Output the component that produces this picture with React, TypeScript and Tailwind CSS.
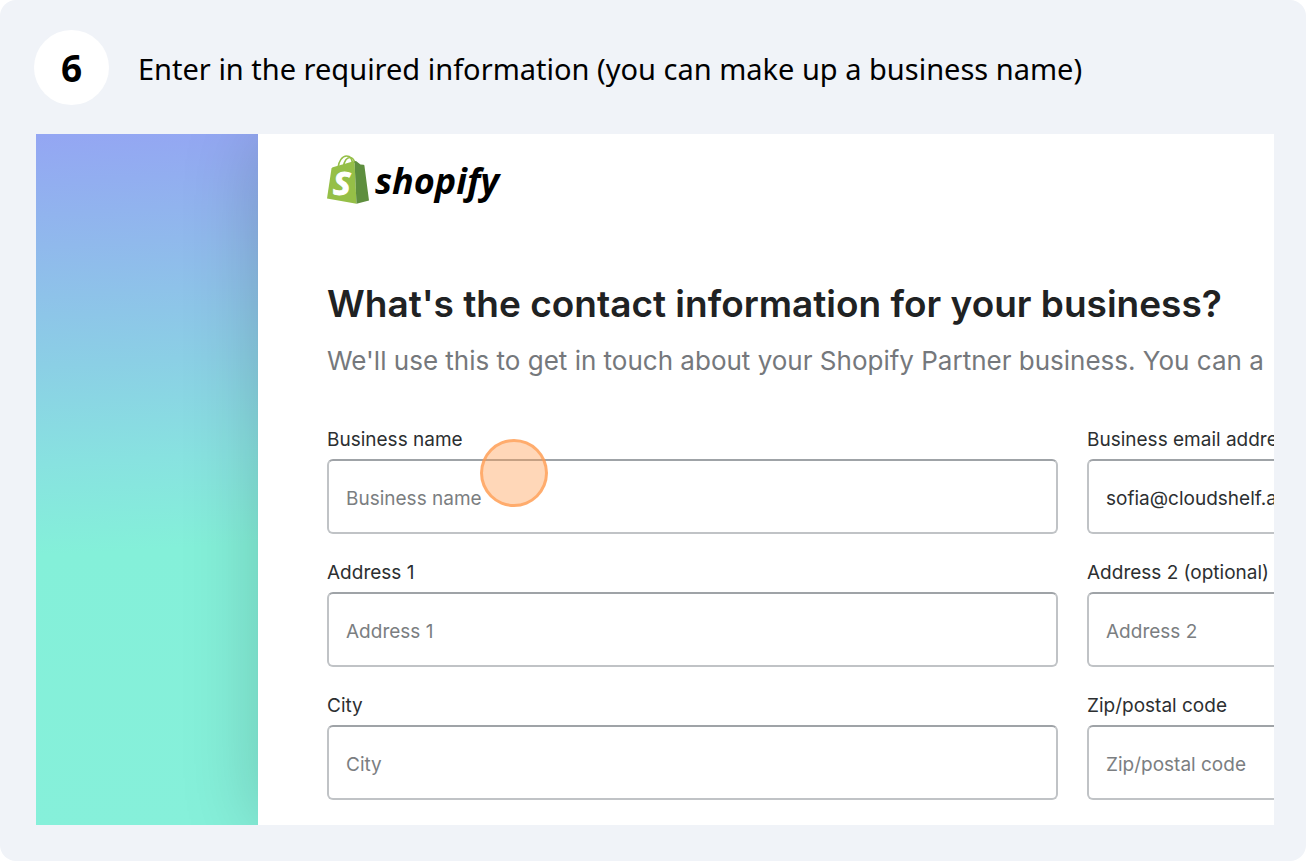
import React from 'react'

type FieldProps = {
  id: string
  label: string
  placeholder: string
  type?: string
  defaultValue?: string
  children?: React.ReactNode
}

const fields: FieldProps[] = [
  { id: 'business-name', label: 'Business name', placeholder: 'Business name' },
  {
    id: 'email',
    label: 'Business email address',
    placeholder: 'Email',
    type: 'email',
    defaultValue: 'sofia@cloudshelf.ai',
  },
  { id: 'address-1', label: 'Address 1', placeholder: 'Address 1' },
  { id: 'address-2', label: 'Address 2 (optional)', placeholder: 'Address 2' },
  { id: 'city', label: 'City', placeholder: 'City' },
  { id: 'zip', label: 'Zip/postal code', placeholder: 'Zip/postal code' },
]

const ShopifyLogo: React.FC = () => {
  return (
    <div className="flex h-[50px] items-center gap-[6px]">
      <svg width="42" height="50" viewBox="0 0 42 50" aria-hidden="true">
        <g fill="none" stroke="#95bf47" strokeWidth="1.6">
          <path d="M11 13C11.500 6 15.500 1 19.500 1C23.500 1 25.500 4.500 25.500 10" />
          <path d="M16.500 12C17 6 20 2 23.500 2.500C26 3 27.300 5.500 27.800 8" />
        </g>
        <path d="M4.500 13.500Q4.800 12.500 5.800 12.200L27.500 6L29.500 48.800L0 43.500Z" fill="#95bf47" />
        <path d="M27.500 6.200L29 6L33.500 9.500L36.500 9.700Q37.200 9.800 37.400 10.500L42 45.500L29.500 48.800Z" fill="#5e8e3e" />
        <text
          x="6"
          y="40"
          fill="#fff"
          stroke="#fff"
          strokeWidth="1"
          fontFamily="'Open Sans', 'Noto Sans', sans-serif"
          fontSize="33"
          fontWeight="700"
          fontStyle="italic"
        >
          S
        </text>
      </svg>
      <span className="pt-[2px] font-['Open_Sans','Noto_Sans',sans-serif] text-[36px] leading-[50px] font-bold text-black italic">
        shopify
      </span>
    </div>
  )
}

const Field: React.FC<FieldProps> = ({ id, label, placeholder, type, defaultValue, children }) => {
  return (
    <div className="relative">
      <label htmlFor={id} className="block h-7 text-[19px] leading-[18px] whitespace-nowrap text-[#2c2f31]">
        {label}
      </label>
      <input
        id={id}
        type={type ?? 'text'}
        placeholder={placeholder}
        defaultValue={defaultValue}
        className="block h-[75px] w-full rounded-md border-2 border-[#c0c3c6] border-t-[#9fa3a7] bg-white px-[17px] pt-[3px] text-[19px] text-[#2c2f31] placeholder:text-[#7b7e81]"
      />
      {children}
    </div>
  )
}

const App: React.FC = () => {
  return (
    <div className="bg-white">
      <section className="rounded-2xl bg-[#f0f3f8] pt-[30px] pr-8 pb-9 pl-9">
        <header className="-ml-[2px] flex items-center gap-[29px] font-['Noto_Sans',sans-serif] text-black">
          <div className="flex size-[75px] shrink-0 items-center justify-center rounded-full bg-white text-[37px] font-bold">
            6
          </div>
          <h1 className="pt-[2px] text-[29px] leading-10">
            Enter in the required information (you can make up a business name)
          </h1>
        </header>

        <div className="mt-[29px] flex overflow-hidden font-['Inter',sans-serif]">
          <div className="w-[222px] shrink-0 bg-[linear-gradient(177deg,#94a6f3_0%,#92aef0_7%,#90b9ec_16%,#8bcfe5_33%,#88e2e0_47%,#84f0d9_60%,#86f0da_100%)]" />
          <main className="min-w-0 flex-1 bg-white pt-[21px] pb-[25px] pl-[69px] shadow-[0_0_72px_rgba(0,0,0,0.18)]">
            <ShopifyLogo />
            <h2 className="mt-[75px] text-[37px] leading-12 font-semibold whitespace-nowrap text-[#202223]">
              What's the contact information for your business?
            </h2>
            <p className="mt-[13px] text-[26px] leading-10 whitespace-nowrap text-[#75787c]">
              We'll use this to get in touch about your Shopify Partner business. You can a
            </p>
            {/* the form runs past the right edge of the panel and is cut off there */}
            <form className="mt-[50px] -mr-[544px] grid grid-cols-2 gap-x-[29px] gap-y-[30px]">
              {fields.map((field) => (
                <Field key={field.id} {...field}>
                  {field.id === 'business-name' && (
                    <span className="pointer-events-none absolute top-2 left-[153px] size-[68px] rounded-full border-3 border-[#ff9a4d]/70 bg-[#ff9a4d]/40" />
                  )}
                </Field>
              ))}
            </form>
          </main>
        </div>
      </section>
    </div>
  )
}

export default App
